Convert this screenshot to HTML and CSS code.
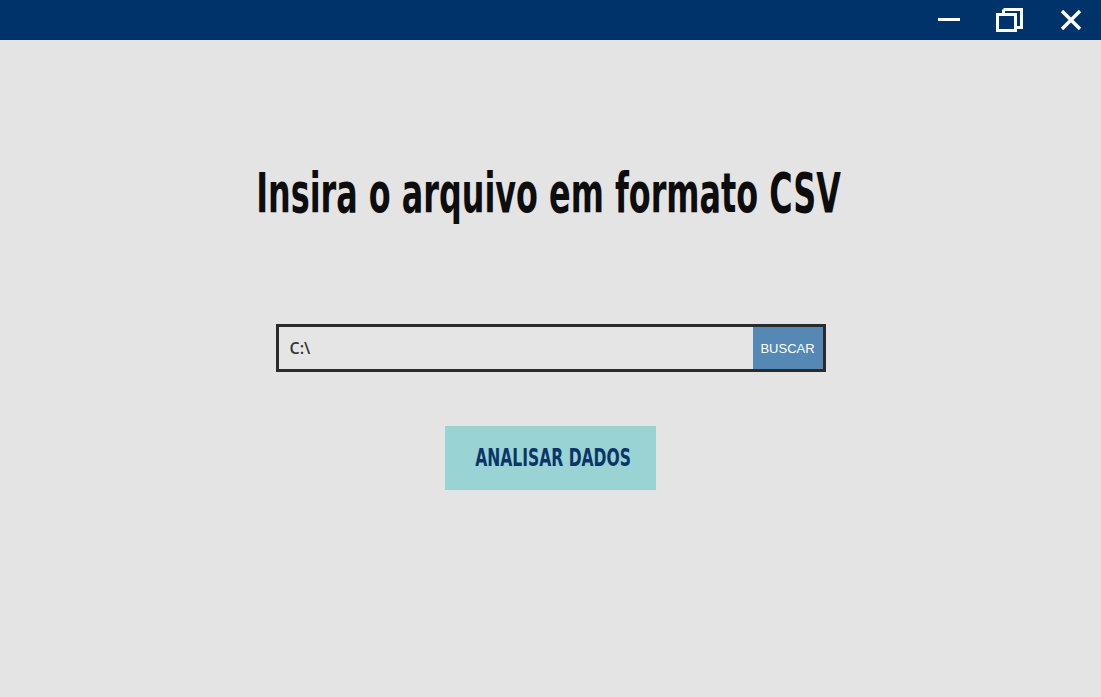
FILE: index.html
```html
<!DOCTYPE html>
<html lang="pt">
<head>
<meta charset="utf-8">
<title>Analisar CSV</title>
<link rel="stylesheet" href="styles.css">
</head>
<body>
<div class="window">
  <header class="titlebar">
    <button class="winbtn" aria-label="Minimizar">
      <svg width="24" height="24" viewBox="0 0 24 24"><rect x="1" y="10" width="22" height="3" fill="#fff"/></svg>
    </button>
    <button class="winbtn" aria-label="Restaurar">
      <svg width="28" height="24" viewBox="0 0 28 24"><path d="M7.5 1.5h18v18h-5" fill="none" stroke="#fff" stroke-width="3"/><path d="M7.5 5.5v-4" fill="none" stroke="#fff" stroke-width="3"/><rect x="1.5" y="6.5" width="18" height="16" fill="none" stroke="#fff" stroke-width="3"/></svg>
    </button>
    <button class="winbtn" aria-label="Fechar">
      <svg width="24" height="24" viewBox="0 0 24 24"><path d="M3 3L21 21M21 3L3 21" stroke="#fff" stroke-width="3.4"/></svg>
    </button>
  </header>
  <main class="content">
    <h1 class="title"><span class="title-text">Insira o arquivo em formato CSV</span></h1>
    <div class="filebox">
      <span class="path">C:\</span>
      <button class="browse">BUSCAR</button>
    </div>
    <button class="analyze"><span class="analyze-text">ANALISAR DADOS</span></button>
  </main>
</div>
</body>
</html>
```

FILE: styles.css
```css
html, body {
  margin: 0;
  padding: 0;
  background: #e4e4e4;
}
.window {
  width: 1101px;
  height: 697px;
  display: flex;
  flex-direction: column;
  background: #e4e4e4;
  overflow: hidden;
}
.titlebar {
  height: 40px;
  background: #00336a;
  display: flex;
  justify-content: flex-end;
  align-items: center;
  padding-right: 0;
}
.winbtn {
  width: 61px;
  height: 40px;
  border: 0;
  background: transparent;
  padding: 0;
  display: flex;
  align-items: center;
  justify-content: center;
}
.content {
  flex: 1;
  display: flex;
  flex-direction: column;
  align-items: center;
}
.title {
  margin: 118px 0 0 0;
  padding-right: 5px;
  height: 70px;
  display: flex;
  justify-content: center;
  align-items: center;
  font-family: "DejaVu Sans Condensed", "DejaVu Sans", sans-serif;
  font-stretch: condensed;
  font-weight: bold;
  font-size: 56px;
  color: #0d0d0d;
  line-height: 1;
  white-space: nowrap;
}
.title-text {
  display: inline-block;
  transform: scaleX(0.632);
}
.filebox {
  margin-top: 96px;
  width: 544px;
  height: 42px;
  border: 3px solid #2b2b2b;
  display: flex;
  align-items: stretch;
  background: #e5e5e5;
}
.path {
  flex: 1;
  display: flex;
  align-items: center;
  padding-left: 11px;
  font-family: "Open Sans", sans-serif;
  font-weight: 600;
  font-size: 16px;
  color: #333;
}
.browse {
  width: 70px;
  border: 0;
  padding: 0;
  background: #5588b4;
  color: #fff;
  font-family: "Liberation Sans", Arial, sans-serif;
  font-size: 13px;
}
.analyze {
  margin-top: 54px;
  width: 211px;
  height: 64px;
  border: 0;
  padding: 0;
  background: #99d3d4;
  color: #0a3566;
  font-family: "DejaVu Sans Condensed", "DejaVu Sans", sans-serif;
  font-weight: bold;
  font-size: 24px;
  white-space: nowrap;
}
.analyze-text {
  display: inline-block;
  transform: scaleX(0.72);
}
```
